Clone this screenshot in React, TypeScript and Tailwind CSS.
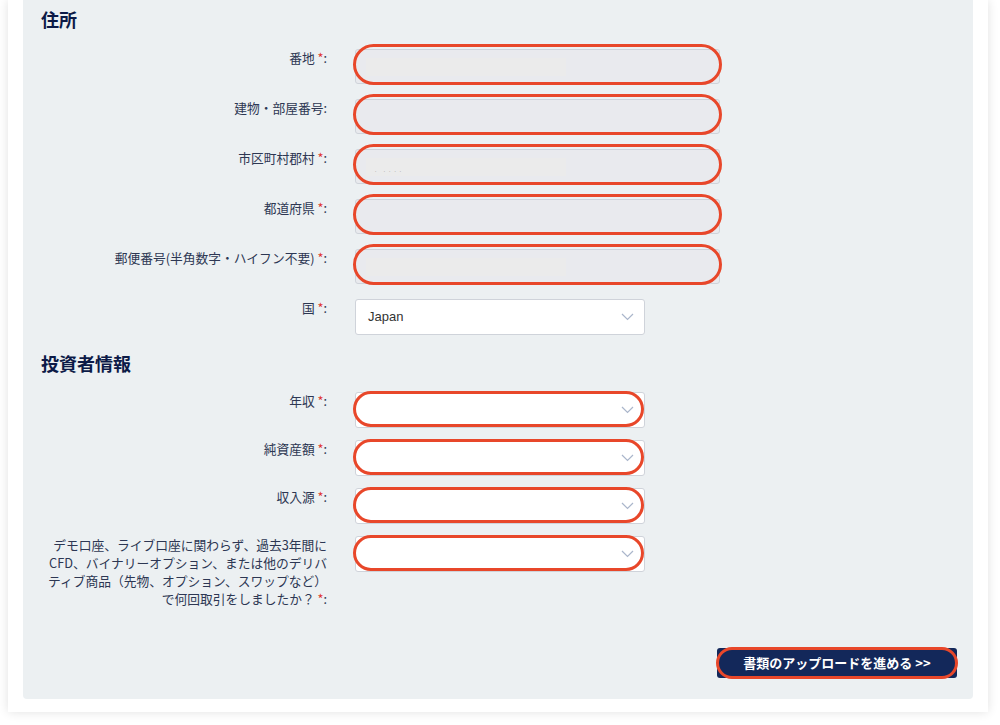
import React from 'react';

const font = { fontFamily: '"Noto Sans CJK JP", "Liberation Sans", sans-serif' };

interface RowProps {
  label: React.ReactNode;
  required?: boolean;
  children: React.ReactNode;
}

const Row: React.FC<RowProps> = ({ label, required, children }) => (
  <div className="flex items-start gap-[28px]">
    <label className="w-[286px] shrink-0 text-right text-[12.75px] leading-[18px] text-[#2d3753]">
      {label}
      {required && <span className="text-[#e0322b]"> *</span>}:
    </label>
    {children}
  </div>
);

const Ring: React.FC<{ className: string }> = ({ className }) => (
  <div className={`pointer-events-none absolute rounded-full border-[3px] border-[#e8472a] ${className}`} />
);

const TextInput: React.FC<{ blur?: boolean; specks?: boolean }> = ({ blur, specks }) => (
  <div className="relative h-[35px] w-[365px]">
    <div className="flex h-full w-full items-center rounded-[3px] border border-[#cfd3da] bg-[#e9eaee] px-[10px]">
      {blur && (
        <div className="relative h-[18px] w-[200px] bg-[#ebebeb]">
          {specks && (
            <span className="absolute bottom-[1px] left-[8px] text-[6px] leading-none tracking-[2px] text-[#9a9a9a]">
              · ····
            </span>
          )}
        </div>
      )}
    </div>
    <Ring className="-top-[5px] -bottom-[1px] -left-[2px] -right-[2px]" />
  </div>
);

const Chevron = () => (
  <svg width="13" height="8" viewBox="0 0 13 8" fill="none" className="shrink-0">
    <path d="M1 1l5.5 5.5L12 1" stroke="#aab6cb" strokeWidth="1.2" />
  </svg>
);

const SelectBox: React.FC<{ value?: string; ring?: boolean }> = ({ value, ring = true }) => (
  <div className="relative h-[36px] w-[290px]">
    <div className="flex h-full w-full items-center justify-between rounded-[3px] border border-[#cfd3da] bg-white pl-[12px] pr-[10px]">
      <span className="text-[13px] text-[#333333]" style={{ fontFamily: '"Liberation Sans", sans-serif' }}>
        {value}
      </span>
      <Chevron />
    </div>
    {ring && <Ring className="-top-[1px] bottom-[1px] -left-[2px] right-[1px]" />}
  </div>
);

export default function App() {
  return (
    <div className="min-h-screen bg-white" style={font}>
      <div className="mx-[8px] w-[980px] bg-white px-[15px] pb-[13px] shadow-[0_0_10px_rgba(0,0,0,0.12)]">
        <div className="rounded-b-[4px] bg-[#ecf0f2] pl-[18px] pr-[16px] pb-[21px]">
          <h2 className="pt-[7px] text-[18px] font-bold leading-[24px] text-[#0c1a47]">住所</h2>

          <div className="mt-[18px] flex flex-col gap-[15px]">
            <Row label="番地" required>
              <TextInput blur />
            </Row>
            <Row label="建物・部屋番号">
              <TextInput />
            </Row>
            <Row label="市区町村郡村" required>
              <TextInput blur specks />
            </Row>
            <Row label="都道府県" required>
              <TextInput />
            </Row>
            <Row label="郵便番号(半角数字・ハイフン不要)" required>
              <TextInput blur />
            </Row>
            <Row label="国" required>
              <SelectBox value="Japan" ring={false} />
            </Row>
          </div>

          <h2 className="mt-[16px] text-[18px] font-bold leading-[24px] text-[#0c1a47]">投資者情報</h2>

          <div className="mt-[17px] flex flex-col gap-[12px]">
            <Row label="年収" required>
              <SelectBox />
            </Row>
            <Row label="純資産額" required>
              <SelectBox />
            </Row>
            <Row label="収入源" required>
              <SelectBox />
            </Row>
            <Row
              label={
                <>
                  デモ口座、ライブ口座に関わらず、過去3年間に
                  <br />
                  CFD、バイナリーオプション、または他のデリバ
                  <br />
                  ティブ商品（先物、オプション、スワップなど）
                  <br />
                  で何回取引をしましたか？
                </>
              }
              required
            >
              <SelectBox />
            </Row>
          </div>

          <div className="mt-[40px] flex justify-end">
            <div className="relative">
              <button className="h-[30px] w-[240px] rounded-[3px] bg-[#13285a] text-[13px] font-bold text-white">
                書類のアップロードを進める &gt;&gt;
              </button>
              <Ring className="-top-[1px] -bottom-[1px] -left-[1px] -right-[1px]" />
            </div>
          </div>
        </div>
      </div>
    </div>
  );
}
